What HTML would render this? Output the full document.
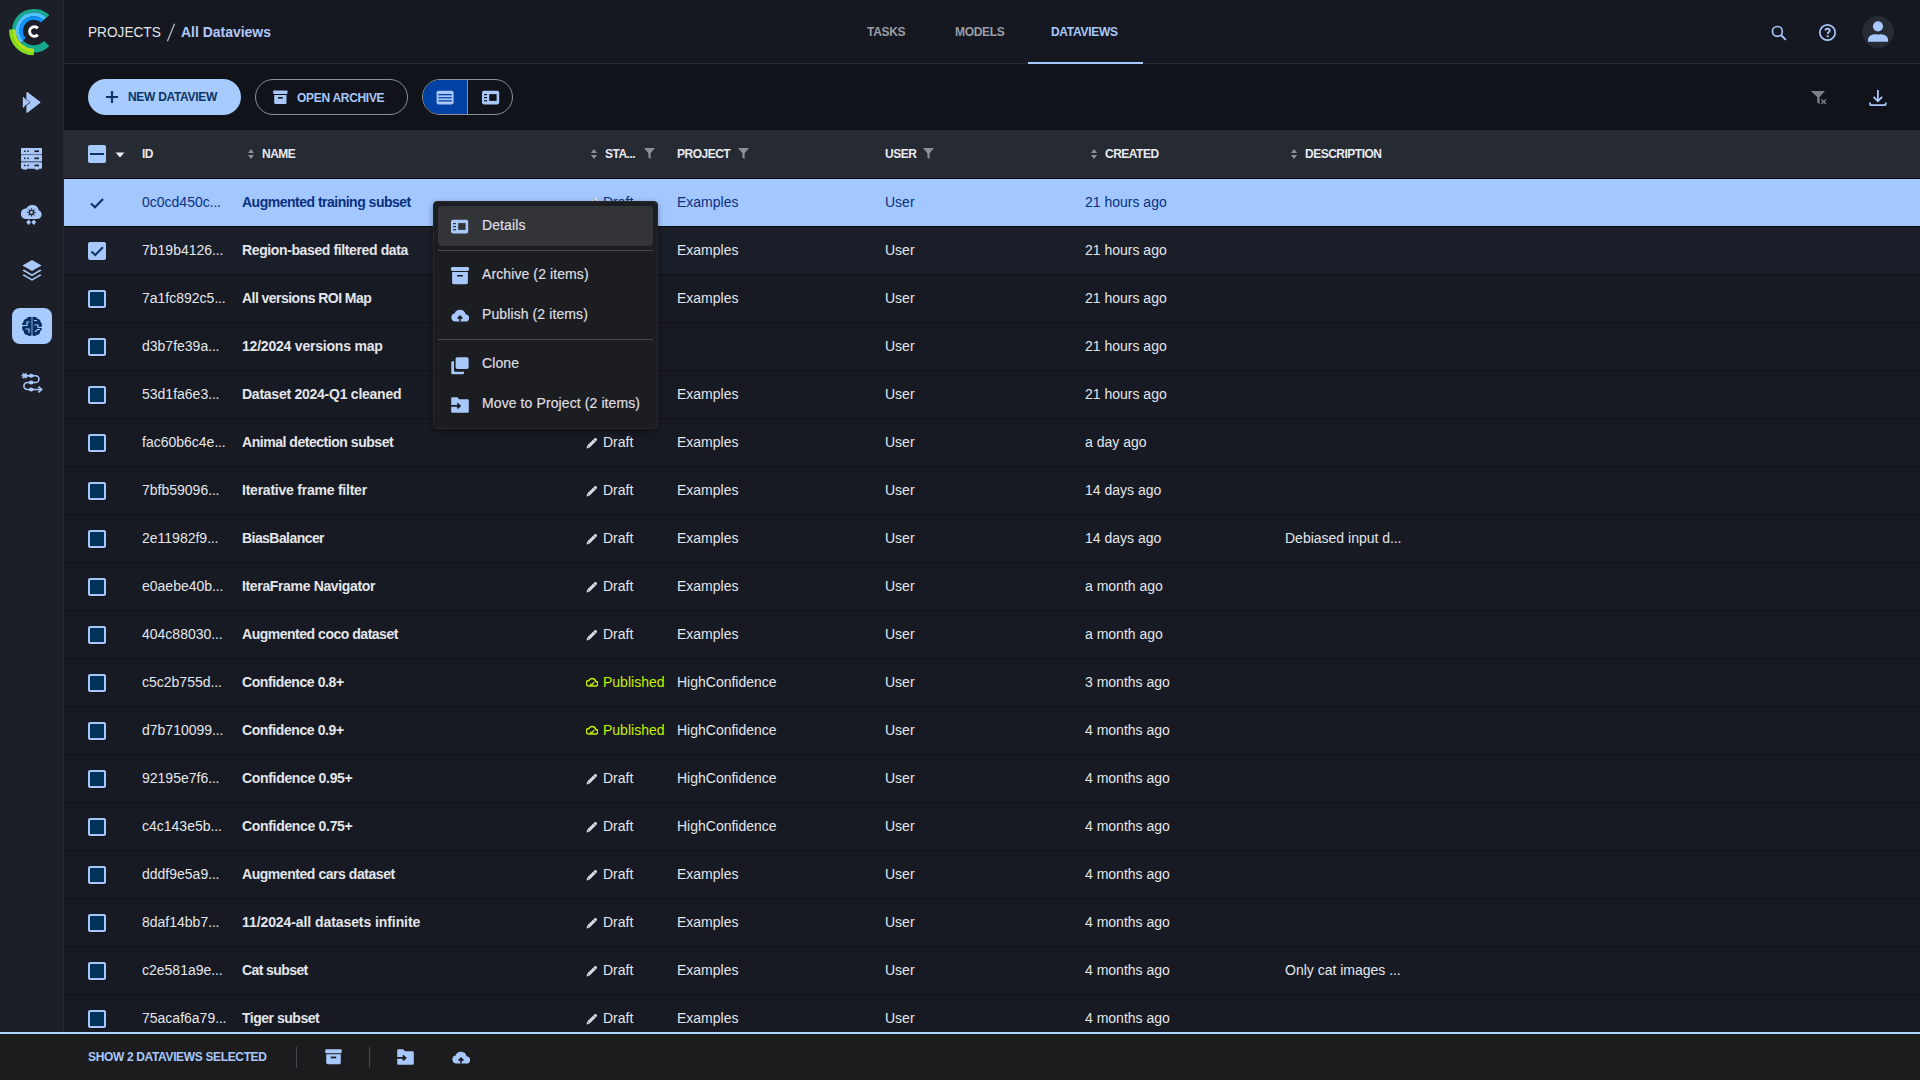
<!DOCTYPE html>
<html><head><meta charset="utf-8">
<style>
*{box-sizing:border-box;margin:0;padding:0}
html,body{width:1920px;height:1080px;overflow:hidden;background:#171a22;font-family:"Liberation Sans",sans-serif;}
.abs{position:absolute}
svg{display:block}
#side{position:absolute;left:0;top:0;width:64px;height:1032px;background:#1c1f27;border-right:1px solid #272b33}
#hdr{position:absolute;left:64px;top:0;width:1856px;height:64px;background:#151820;border-bottom:1px solid #272b33}
#tb{position:absolute;left:64px;top:64px;width:1856px;height:66px;background:#10131a}
#th{position:absolute;left:64px;top:130px;width:1856px;height:49px;background:#262a33;border-bottom:1px solid #06080c}
.row{position:absolute;left:64px;width:1856px;height:48px;border-bottom:1px solid #0f1116;background:#171a22;color:#e3e6ec;font-size:14px;line-height:47px;white-space:nowrap}
.row.chk{background:#1a1e28}
.row span{position:absolute;top:0}
.c-id{left:78px}
.c-name{left:178px;font-weight:700;letter-spacing:-0.45px}
.c-st{left:522px}
.c-st .pen{position:absolute;left:0;top:18px}
.c-st .stt{position:absolute;left:17px;font-weight:400}
.c-st.pub .stt{color:#c4f000}
.c-pr{left:613px}
.c-us{left:821px}
.c-cr{left:1021px}
.c-de{left:1221px}
.hdt{position:absolute;top:0;line-height:48px;font-size:12px;font-weight:700;color:#e8ebf1;letter-spacing:-0.5px;white-space:nowrap}
.hic{position:absolute;top:18px}
.cb{position:absolute;left:24px;top:15px;width:18px;height:18px;border:2px solid #a8c8fb;background:#00325a;border-radius:2px}
.cb.on{background:#a8c8fb}
.sel{background:#a3c8ff;color:#0a3080;border-bottom-color:#05070b}
.sel .c-name{color:#0a3080}
i.el{font-style:normal;letter-spacing:-0.2px}
.btn{position:absolute;top:79px;height:36px;border-radius:18px;font-size:12px;font-weight:700;line-height:36px;white-space:nowrap;letter-spacing:-0.3px}
#foot{position:absolute;left:0;top:1032px;width:1920px;height:48px;background:#1c1c1f;border-top:2px solid #a9d2fd}
.menu{position:absolute;left:433px;top:201px;width:225px;height:228px;background:#1c1d20;border:1px solid #26282c;border-radius:4px;box-shadow:0 2px 6px rgba(0,0,0,.35)}
.mi{position:absolute;left:4px;width:215px;height:40px;font-size:14px;line-height:38px;-webkit-text-stroke:0.2px #dedfe2;letter-spacing:0.1px;color:#dedfe2;white-space:nowrap}
.mi .t{position:absolute;left:44px;top:0}
.mi svg{position:absolute;left:13px}
.msep{position:absolute;left:4px;width:215px;height:1px;background:#45474d}
.tab{position:absolute;top:0;line-height:64px;font-size:12px;font-weight:700;color:#9a9da4;letter-spacing:-0.3px}
</style></head><body>

<div id="side">
 <!-- logo -->
 <svg class="abs" style="left:0;top:0" width="64" height="64" viewBox="0 0 64 64">
  <g transform="translate(33.8 30.7)">
   <path d="M14.14 -14.14 A20.00 20.00 0 0 0 -20.00 0.00" fill="none" stroke="#16a98b" stroke-width="3.6"/>
   <path d="M12.87 12.87 A18.20 18.20 0 0 1 -12.87 12.87" fill="none" stroke="#16a98b" stroke-width="7.4"/>
   <path d="M11.12 -11.92 A16.30 16.30 0 0 0 -11.73 11.32" fill="none" stroke="#52c2ff" stroke-width="3.8"/>
   <path d="M8.50 -9.44 A12.70 12.70 0 0 0 -9.44 8.50" fill="none" stroke="#0b93ff" stroke-width="3.5"/>
   <path d="M0.00 23.00 A23.00 23.00 0 0 1 -22.97 -1.20" fill="none" stroke="#84de1e" stroke-width="3.2"/>
   <path d="M0.00 19.80 A19.80 19.80 0 0 1 -19.77 -1.04" fill="none" stroke="#b2e31b" stroke-width="3.6"/>
  </g>
  <path d="M37.8 28.3 A4.7 4.8 0 1 0 37.8 34.7" fill="none" stroke="#fff" stroke-width="2.9"/>
 </svg>
 <!-- pipelines / experiments -->
 <svg class="abs" style="left:20px;top:90px" width="24" height="25" viewBox="0 0 24 25">
  <path d="M7.2 2.9 L19.6 12.4 L7.2 21.9 Z" fill="#a8c8fb" stroke="#a8c8fb" stroke-width="1.6" stroke-linejoin="round"/>
  <path d="M3.4 7.6 L10.2 12.4 L3.4 17.3 Z" fill="#a8c8fb" stroke="#1c1f27" stroke-width="0.8" stroke-linejoin="round"/>
  <path d="M3.5 7.8 L3.5 17.1" stroke="#a8c8fb" stroke-width="1.4" stroke-linecap="round"/>
  <path d="M3.6 7.7 L9.6 12.2" stroke="#a8c8fb" stroke-width="0.6"/>
 </svg>
 <!-- servers -->
 <svg class="abs" style="left:21px;top:148px" width="21" height="22" viewBox="0 0 21 22">
  <rect x="0" y="0" width="21" height="6.5" rx="0.8" fill="#a8c8fb"/>
  <rect x="0" y="7.1" width="21" height="6.5" rx="0.8" fill="#a8c8fb"/>
  <rect x="0" y="14.2" width="21" height="6.5" rx="0.8" fill="#a8c8fb"/>
  <rect x="2" y="20" width="4" height="1.6" fill="#a8c8fb"/><rect x="14" y="20" width="4" height="1.6" fill="#a8c8fb"/>
  <g fill="#1c1f27"><rect x="3" y="2.5" width="1.5" height="1.5"/><rect x="6.2" y="2.5" width="1.5" height="1.5"/><rect x="13.4" y="2.4" width="4.6" height="1.7"/>
  <rect x="3" y="9.6" width="1.5" height="1.5"/><rect x="6.2" y="9.6" width="1.5" height="1.5"/><rect x="13.4" y="9.5" width="4.6" height="1.7"/>
  <rect x="3" y="16.7" width="1.5" height="1.5"/><rect x="6.2" y="16.7" width="1.5" height="1.5"/><rect x="13.4" y="16.6" width="4.6" height="1.7"/></g>
 </svg>
 <!-- cloud -->
 <svg class="abs" style="left:21px;top:203px" width="22" height="23" viewBox="0 0 22 23">
  <path d="M4.6 16 H16.6 A4.6 4.6 0 0 0 17.8 7.2 A6.6 6.6 0 0 0 5.4 5.6 A5.2 5.2 0 0 0 4.6 16 Z" fill="#a8c8fb"/>
  <circle cx="10.5" cy="9.4" r="2.1" fill="none" stroke="#1c1f27" stroke-width="1.3"/>
  <g stroke="#1c1f27" stroke-width="1.2"><path d="M10.5 5.2 V6.6 M10.5 12.2 V13.6 M6.3 9.4 H7.7 M13.3 9.4 H14.7 M7.6 6.5 L8.5 7.4 M13.4 6.5 L12.5 7.4 M7.6 12.3 L8.5 11.4 M13.4 12.3 L12.5 11.4"/></g>
  <path d="M7.6 16.6 L10 19.3 L7.6 22 L5.2 19.3 Z M12.8 16.6 L15.2 19.3 L12.8 22 L10.4 19.3 Z" fill="#a8c8fb"/>
 </svg>
 <!-- layers -->
 <svg class="abs" style="left:21px;top:259px" width="22" height="23" viewBox="0 0 22 23">
  <path d="M11 1 L20.5 6.5 L11 12 L1.5 6.5 Z" fill="#a8c8fb"/>
  <path d="M3 10.6 L11 15.3 L19 10.6 L20.6 11.6 L11 17.2 L1.4 11.6 Z" fill="#a8c8fb"/>
  <path d="M3 15.2 L11 19.9 L19 15.2 L20.6 16.2 L11 21.8 L1.4 16.2 Z" fill="#a8c8fb"/>
 </svg>
 <!-- brain active -->
 <div class="abs" style="left:12px;top:308px;width:40px;height:36px;border-radius:8px;background:#a8cbfd"></div>
 <svg class="abs" style="left:21px;top:316px" width="22" height="21" viewBox="0 0 22 21">
  <path d="M10.6 1 Q6.5 0.2 5.2 3 Q2.6 3.2 2.4 6 Q0.2 7.8 1.4 10.5 Q0.4 13.5 2.8 15.2 Q3 18.6 6.4 19 Q8.2 20.8 10.6 19.6 Z" fill="#07305e"/>
  <path d="M11.4 1 Q15.5 0.2 16.8 3 Q19.4 3.2 19.6 6 Q21.8 7.8 20.6 10.5 Q21.6 13.5 19.2 15.2 Q19 18.6 15.6 19 Q13.8 20.8 11.4 19.6 Z" fill="#07305e"/>
  <g fill="none" stroke="#a8cbfd" stroke-width="1.1"><path d="M0.5 9.5 H6 V6 H8.5 M4.5 13 H8 V17 M13 4.5 H16 M13.5 9 H17 V11.5 H21 M14 16 L16.5 13.5 H19"/></g>
 </svg>
 <!-- pipelines flow -->
 <svg class="abs" style="left:21px;top:372px" width="22" height="22" viewBox="0 0 22 22">
  <path d="M0.5 3.8 H14.6 A3.35 3.35 0 0 1 14.6 10.5 H6.4 A3.5 3.5 0 0 0 6.4 17.5 H20" fill="none" stroke="#a8c8fb" stroke-width="1.6"/>
  <path d="M1.6 1.4 L4.2 3.8 L1.6 6.2 M4 1.4 L6.6 3.8 L4 6.2" fill="none" stroke="#a8c8fb" stroke-width="1.5"/>
  <ellipse cx="10.2" cy="3.8" rx="2.4" ry="2" fill="#a8c8fb"/><ellipse cx="10.2" cy="10.5" rx="2.4" ry="2" fill="#a8c8fb"/><ellipse cx="10.2" cy="17.5" rx="2.4" ry="2" fill="#a8c8fb"/>
  <path d="M17.4 14.6 L20.6 17.5 L17.4 20.4" fill="none" stroke="#a8c8fb" stroke-width="1.7"/>
 </svg>
</div>

<div id="hdr">
 <div class="abs" style="left:24px;top:0;line-height:63px;font-size:15.5px;color:#e1e4ea;white-space:nowrap;transform:scaleX(0.88);transform-origin:0 0">PROJECTS</div>
 <svg class="abs" style="left:102px;top:23px" width="10" height="19" viewBox="0 0 10 19"><path d="M8.6 0.8 L1.4 18.2" stroke="#b4b8c0" stroke-width="1.3"/></svg>
 <div class="abs" style="left:117px;top:0;line-height:63px;font-size:15.5px;font-weight:700;color:#b2c8fb;white-space:nowrap;transform:scaleX(0.9);transform-origin:0 0">All Dataviews</div>
 <div class="tab" style="left:803px">TASKS</div>
 <div class="tab" style="left:891px">MODELS</div>
 <div class="tab" style="left:987px;color:#a8c8fb">DATAVIEWS</div>
 <div class="abs" style="left:964px;top:62px;width:115px;height:2px;background:#a8c8fb"></div>
 <!-- search -->
 <svg class="abs" style="left:1707px;top:25px" width="16" height="16" viewBox="0 0 16 16">
  <circle cx="6.4" cy="6.4" r="4.9" fill="none" stroke="#a8c8fb" stroke-width="1.7"/>
  <path d="M10 10 L14.8 14.8" stroke="#a8c8fb" stroke-width="1.9"/>
 </svg>
 <!-- help -->
 <svg class="abs" style="left:1754px;top:23px" width="19" height="19" viewBox="0 0 19 19">
  <circle cx="9.5" cy="9.5" r="7.7" fill="none" stroke="#a8c8fb" stroke-width="1.7"/>
  <path d="M7.4 7.6 Q7.4 5.6 9.6 5.6 Q11.7 5.6 11.7 7.4 Q11.7 8.5 10.5 9.2 Q9.7 9.7 9.7 10.9" fill="none" stroke="#a8c8fb" stroke-width="1.9"/>
  <rect x="8.7" y="12.3" width="2" height="1.9" fill="#a8c8fb"/>
 </svg>
 <!-- avatar -->
 <div class="abs" style="left:1798px;top:16px;width:32px;height:32px;border-radius:16px;background:#262a33"></div>
 <svg class="abs" style="left:1803px;top:20px" width="22" height="22" viewBox="0 0 22 22">
  <circle cx="11" cy="6.3" r="5.1" fill="#a8c8fb"/>
  <path d="M1 21.8 V19.8 Q1 15.6 6 14.4 Q8.5 13.8 11 14.6 Q13.5 13.8 16 14.4 Q21 15.6 21 19.8 V21.8 Z" fill="#a8c8fb"/>
 </svg>
</div>

<div id="tb">
 <div class="btn" style="left:24px;top:15px;width:153px;background:#a8cbfd;color:#0b3566">
  <svg class="abs" style="left:18px;top:12px" width="12" height="12" viewBox="0 0 12 12"><path d="M6 0 V12 M0 6 H12" stroke="#0b3566" stroke-width="2.2"/></svg>
  <span class="abs" style="left:40px;top:0">NEW DATAVIEW</span>
 </div>
 <div class="btn" style="left:191px;top:15px;width:153px;border:1px solid #8c8f95;color:#a8c8fb">
  <svg class="abs" style="left:17px;top:10px" width="15" height="15" viewBox="0 0 15 15"><rect x="0.2" y="0.4" width="14.3" height="3.6" rx="0.8" fill="#a8c8fb"/><path d="M1.2 5 H13.5 V12.8 Q13.5 14 12.3 14 H2.4 Q1.2 14 1.2 12.8 Z" fill="#a8c8fb"/><rect x="5" y="7" width="4.7" height="1.6" fill="#10131a"/></svg>
  <span class="abs" style="left:41px;top:0">OPEN ARCHIVE</span>
 </div>
 <div class="abs" style="left:358px;top:15px;width:91px;height:36px;border-radius:18px;border:1px solid #8c8f95;overflow:hidden">
  <div class="abs" style="left:0;top:0;width:44px;height:36px;background:#0041a3"></div>
  <div class="abs" style="left:44px;top:0;width:1px;height:36px;background:#8c8f95"></div>
  <svg class="abs" style="left:13px;top:10px" width="18" height="15" viewBox="0 0 18 15"><rect x="0.6" y="0.8" width="17" height="13.6" rx="1.8" fill="#a8c8fb"/><rect x="2.4" y="4" width="13.4" height="1.3" fill="#0041a3"/><rect x="2.4" y="7.1" width="13.4" height="1.3" fill="#0041a3"/><rect x="2.4" y="10.2" width="13.4" height="1.3" fill="#0041a3"/></svg>
  <svg class="abs" style="left:59px;top:10px" width="18" height="15" viewBox="0 0 18 15"><rect x="0" y="0.8" width="17.2" height="13.6" rx="1.8" fill="#a8c8fb"/><rect x="7.2" y="4.1" width="7.4" height="6.8" fill="#10131a"/><rect x="2" y="4" width="3" height="1.2" fill="#10131a"/><rect x="2" y="7" width="3" height="1.2" fill="#10131a"/><rect x="2" y="10.1" width="3" height="1.2" fill="#10131a"/></svg>
 </div>
 <!-- filter clear -->
 <svg class="abs" style="left:1746px;top:26px" width="18" height="16" viewBox="0 0 18 16"><path d="M0.8 0.9 H15 L9.6 6.9 V14.2 L7.2 12.4 V6.9 Z" fill="#7c7f85"/><path d="M11.4 9.4 L16 14 M16 9.4 L11.4 14" stroke="#7c7f85" stroke-width="1.4"/></svg>
 <!-- download -->
 <svg class="abs" style="left:1804px;top:26px" width="20" height="17" viewBox="0 0 20 17"><path d="M9.9 0 V11.6 M5.6 6.9 L9.9 11.2 L14.2 6.9" fill="none" stroke="#a8c8fb" stroke-width="1.8"/><path d="M2 12.4 V13.4 Q2 15.2 3.8 15.2 H16 Q17.8 15.2 17.8 13.4 V12.4" fill="none" stroke="#a8c8fb" stroke-width="1.8"/></svg>
</div>

<div id="th">
 <div class="abs" style="left:24px;top:15px;width:18px;height:18px;border-radius:2px;background:#a8cbfd"><div class="abs" style="left:2px;top:8px;width:14px;height:2px;background:#0b3566"></div></div>
 <svg class="abs" style="left:51px;top:22px" width="10" height="6" viewBox="0 0 10 6"><path d="M0.5 0.5 H9.5 L5 5.5 Z" fill="#e8ebf1"/></svg>
 <div class="hdt" style="left:78px">ID</div>
 <div class="hic" style="left:184px"><svg width="6" height="12" viewBox="0 0 6 12"><path d="M0 5 L3 1 L6 5 Z M0 7 L3 11 L6 7 Z" fill="#8d9096"/></svg></div><div class="hdt" style="left:198px">NAME</div>
 <div class="hic" style="left:527px"><svg width="6" height="12" viewBox="0 0 6 12"><path d="M0 5 L3 1 L6 5 Z M0 7 L3 11 L6 7 Z" fill="#8d9096"/></svg></div><div class="hdt" style="left:541px">STA...</div><div class="hic" style="left:580px"><svg width="11" height="11" viewBox="0 0 11 11"><path d="M0 0 H11 L6.6 5.2 V11 L4.4 9.6 V5.2 Z" fill="#8d9096"/></svg></div>
 <div class="hdt" style="left:613px">PROJECT</div><div class="hic" style="left:674px"><svg width="11" height="11" viewBox="0 0 11 11"><path d="M0 0 H11 L6.6 5.2 V11 L4.4 9.6 V5.2 Z" fill="#8d9096"/></svg></div>
 <div class="hdt" style="left:821px">USER</div><div class="hic" style="left:859px"><svg width="11" height="11" viewBox="0 0 11 11"><path d="M0 0 H11 L6.6 5.2 V11 L4.4 9.6 V5.2 Z" fill="#8d9096"/></svg></div>
 <div class="hic" style="left:1027px"><svg width="6" height="12" viewBox="0 0 6 12"><path d="M0 5 L3 1 L6 5 Z M0 7 L3 11 L6 7 Z" fill="#8d9096"/></svg></div><div class="hdt" style="left:1041px">CREATED</div>
 <div class="hic" style="left:1227px"><svg width="6" height="12" viewBox="0 0 6 12"><path d="M0 5 L3 1 L6 5 Z M0 7 L3 11 L6 7 Z" fill="#8d9096"/></svg></div><div class="hdt" style="left:1241px">DESCRIPTION</div>
</div>

<div class="row sel" style="top:179px"><svg class="abs" style="left:25px;top:17px" width="16" height="14" viewBox="0 0 16 14"><path d="M2 7.5 L6 11.2 L14 3" fill="none" stroke="#0b3566" stroke-width="2.2"/></svg><span class="c-id">0c0cd450c<i class="el">...</i></span><span class="c-name" style="letter-spacing:-0.5px">Augmented training subset</span><span class="c-st"><svg class="pen" width="12" height="12" viewBox="0 0 12 12"><path d="M0.5 11.5 L1.2 8.6 L8.6 1.2 Q9.3 0.5 10 1.2 L10.8 2 Q11.5 2.7 10.8 3.4 L3.4 10.8 Z" fill="#e3e6ec"/><path d="M7.7 2.3 L9.7 4.3 M1.3 8.5 L3.5 10.7" stroke="#171a22" stroke-width="0.6"/><path d="M2.6 8.6 L8.6 2.6 M3.4 9.4 L9.4 3.4" stroke="#9aa0ac" stroke-width="0.35"/></svg><b class="stt">Draft</b></span><span class="c-pr">Examples</span><span class="c-us">User</span><span class="c-cr">21 hours ago</span><span class="c-de"></span></div>
<div class="row chk" style="top:227px"><div class="cb on"><svg width="18" height="18" viewBox="0 0 18 18" style="position:absolute;left:-2px;top:-2px"><path d="M3.4 9.4 L7.3 13 L14.9 5.2" fill="none" stroke="#0b3566" stroke-width="2"/></svg></div><span class="c-id">7b19b4126<i class="el">...</i></span><span class="c-name" style="letter-spacing:-0.38px">Region-based filtered data</span><span class="c-st"><svg class="pen" width="12" height="12" viewBox="0 0 12 12"><path d="M0.5 11.5 L1.2 8.6 L8.6 1.2 Q9.3 0.5 10 1.2 L10.8 2 Q11.5 2.7 10.8 3.4 L3.4 10.8 Z" fill="#e3e6ec"/><path d="M7.7 2.3 L9.7 4.3 M1.3 8.5 L3.5 10.7" stroke="#171a22" stroke-width="0.6"/><path d="M2.6 8.6 L8.6 2.6 M3.4 9.4 L9.4 3.4" stroke="#9aa0ac" stroke-width="0.35"/></svg><b class="stt">Draft</b></span><span class="c-pr">Examples</span><span class="c-us">User</span><span class="c-cr">21 hours ago</span><span class="c-de"></span></div>
<div class="row" style="top:275px"><div class="cb"></div><span class="c-id">7a1fc892c5<i class="el">...</i></span><span class="c-name" style="letter-spacing:-0.54px">All versions ROI Map</span><span class="c-st"><svg class="pen" width="12" height="12" viewBox="0 0 12 12"><path d="M0.5 11.5 L1.2 8.6 L8.6 1.2 Q9.3 0.5 10 1.2 L10.8 2 Q11.5 2.7 10.8 3.4 L3.4 10.8 Z" fill="#e3e6ec"/><path d="M7.7 2.3 L9.7 4.3 M1.3 8.5 L3.5 10.7" stroke="#171a22" stroke-width="0.6"/><path d="M2.6 8.6 L8.6 2.6 M3.4 9.4 L9.4 3.4" stroke="#9aa0ac" stroke-width="0.35"/></svg><b class="stt">Draft</b></span><span class="c-pr">Examples</span><span class="c-us">User</span><span class="c-cr">21 hours ago</span><span class="c-de"></span></div>
<div class="row" style="top:323px"><div class="cb"></div><span class="c-id">d3b7fe39a<i class="el">...</i></span><span class="c-name" style="letter-spacing:-0.21px">12/2024 versions map</span><span class="c-st"><svg class="pen" width="12" height="12" viewBox="0 0 12 12"><path d="M0.5 11.5 L1.2 8.6 L8.6 1.2 Q9.3 0.5 10 1.2 L10.8 2 Q11.5 2.7 10.8 3.4 L3.4 10.8 Z" fill="#e3e6ec"/><path d="M7.7 2.3 L9.7 4.3 M1.3 8.5 L3.5 10.7" stroke="#171a22" stroke-width="0.6"/><path d="M2.6 8.6 L8.6 2.6 M3.4 9.4 L9.4 3.4" stroke="#9aa0ac" stroke-width="0.35"/></svg><b class="stt">Draft</b></span><span class="c-pr"></span><span class="c-us">User</span><span class="c-cr">21 hours ago</span><span class="c-de"></span></div>
<div class="row" style="top:371px"><div class="cb"></div><span class="c-id">53d1fa6e3<i class="el">...</i></span><span class="c-name" style="letter-spacing:-0.25px">Dataset 2024-Q1 cleaned</span><span class="c-st"><svg class="pen" width="12" height="12" viewBox="0 0 12 12"><path d="M0.5 11.5 L1.2 8.6 L8.6 1.2 Q9.3 0.5 10 1.2 L10.8 2 Q11.5 2.7 10.8 3.4 L3.4 10.8 Z" fill="#e3e6ec"/><path d="M7.7 2.3 L9.7 4.3 M1.3 8.5 L3.5 10.7" stroke="#171a22" stroke-width="0.6"/><path d="M2.6 8.6 L8.6 2.6 M3.4 9.4 L9.4 3.4" stroke="#9aa0ac" stroke-width="0.35"/></svg><b class="stt">Draft</b></span><span class="c-pr">Examples</span><span class="c-us">User</span><span class="c-cr">21 hours ago</span><span class="c-de"></span></div>
<div class="row" style="top:419px"><div class="cb"></div><span class="c-id">fac60b6c4e<i class="el">...</i></span><span class="c-name" style="letter-spacing:-0.46px">Animal detection subset</span><span class="c-st"><svg class="pen" width="12" height="12" viewBox="0 0 12 12"><path d="M0.5 11.5 L1.2 8.6 L8.6 1.2 Q9.3 0.5 10 1.2 L10.8 2 Q11.5 2.7 10.8 3.4 L3.4 10.8 Z" fill="#e3e6ec"/><path d="M7.7 2.3 L9.7 4.3 M1.3 8.5 L3.5 10.7" stroke="#171a22" stroke-width="0.6"/><path d="M2.6 8.6 L8.6 2.6 M3.4 9.4 L9.4 3.4" stroke="#9aa0ac" stroke-width="0.35"/></svg><b class="stt">Draft</b></span><span class="c-pr">Examples</span><span class="c-us">User</span><span class="c-cr">a day ago</span><span class="c-de"></span></div>
<div class="row" style="top:467px"><div class="cb"></div><span class="c-id">7bfb59096<i class="el">...</i></span><span class="c-name" style="letter-spacing:-0.23px">Iterative frame filter</span><span class="c-st"><svg class="pen" width="12" height="12" viewBox="0 0 12 12"><path d="M0.5 11.5 L1.2 8.6 L8.6 1.2 Q9.3 0.5 10 1.2 L10.8 2 Q11.5 2.7 10.8 3.4 L3.4 10.8 Z" fill="#e3e6ec"/><path d="M7.7 2.3 L9.7 4.3 M1.3 8.5 L3.5 10.7" stroke="#171a22" stroke-width="0.6"/><path d="M2.6 8.6 L8.6 2.6 M3.4 9.4 L9.4 3.4" stroke="#9aa0ac" stroke-width="0.35"/></svg><b class="stt">Draft</b></span><span class="c-pr">Examples</span><span class="c-us">User</span><span class="c-cr">14 days ago</span><span class="c-de"></span></div>
<div class="row" style="top:515px"><div class="cb"></div><span class="c-id">2e11982f9<i class="el">...</i></span><span class="c-name" style="letter-spacing:-0.56px">BiasBalancer</span><span class="c-st"><svg class="pen" width="12" height="12" viewBox="0 0 12 12"><path d="M0.5 11.5 L1.2 8.6 L8.6 1.2 Q9.3 0.5 10 1.2 L10.8 2 Q11.5 2.7 10.8 3.4 L3.4 10.8 Z" fill="#e3e6ec"/><path d="M7.7 2.3 L9.7 4.3 M1.3 8.5 L3.5 10.7" stroke="#171a22" stroke-width="0.6"/><path d="M2.6 8.6 L8.6 2.6 M3.4 9.4 L9.4 3.4" stroke="#9aa0ac" stroke-width="0.35"/></svg><b class="stt">Draft</b></span><span class="c-pr">Examples</span><span class="c-us">User</span><span class="c-cr">14 days ago</span><span class="c-de">Debiased input d<i class="el">...</i></span></div>
<div class="row" style="top:563px"><div class="cb"></div><span class="c-id">e0aebe40b<i class="el">...</i></span><span class="c-name" style="letter-spacing:-0.35px">IteraFrame Navigator</span><span class="c-st"><svg class="pen" width="12" height="12" viewBox="0 0 12 12"><path d="M0.5 11.5 L1.2 8.6 L8.6 1.2 Q9.3 0.5 10 1.2 L10.8 2 Q11.5 2.7 10.8 3.4 L3.4 10.8 Z" fill="#e3e6ec"/><path d="M7.7 2.3 L9.7 4.3 M1.3 8.5 L3.5 10.7" stroke="#171a22" stroke-width="0.6"/><path d="M2.6 8.6 L8.6 2.6 M3.4 9.4 L9.4 3.4" stroke="#9aa0ac" stroke-width="0.35"/></svg><b class="stt">Draft</b></span><span class="c-pr">Examples</span><span class="c-us">User</span><span class="c-cr">a month ago</span><span class="c-de"></span></div>
<div class="row" style="top:611px"><div class="cb"></div><span class="c-id">404c88030<i class="el">...</i></span><span class="c-name" style="letter-spacing:-0.48px">Augmented coco dataset</span><span class="c-st"><svg class="pen" width="12" height="12" viewBox="0 0 12 12"><path d="M0.5 11.5 L1.2 8.6 L8.6 1.2 Q9.3 0.5 10 1.2 L10.8 2 Q11.5 2.7 10.8 3.4 L3.4 10.8 Z" fill="#e3e6ec"/><path d="M7.7 2.3 L9.7 4.3 M1.3 8.5 L3.5 10.7" stroke="#171a22" stroke-width="0.6"/><path d="M2.6 8.6 L8.6 2.6 M3.4 9.4 L9.4 3.4" stroke="#9aa0ac" stroke-width="0.35"/></svg><b class="stt">Draft</b></span><span class="c-pr">Examples</span><span class="c-us">User</span><span class="c-cr">a month ago</span><span class="c-de"></span></div>
<div class="row" style="top:659px"><div class="cb"></div><span class="c-id">c5c2b755d<i class="el">...</i></span><span class="c-name" style="letter-spacing:-0.4px">Confidence 0.8+</span><span class="c-st pub"><svg class="pen" width="12" height="10" viewBox="0 0 12 10"><path d="M3 9 H9.5 A2.3 2.3 0 0 0 9.6 4.4 A3.6 3.6 0 0 0 2.8 3.6 A2.7 2.7 0 0 0 3 9 Z" fill="none" stroke="#c4f000" stroke-width="1.5"/><path d="M4.2 6.6 L5.6 8 L8.2 5.2" fill="none" stroke="#c4f000" stroke-width="1.3"/></svg><b class="stt">Published</b></span><span class="c-pr">HighConfidence</span><span class="c-us">User</span><span class="c-cr">3 months ago</span><span class="c-de"></span></div>
<div class="row" style="top:707px"><div class="cb"></div><span class="c-id">d7b710099<i class="el">...</i></span><span class="c-name" style="letter-spacing:-0.4px">Confidence 0.9+</span><span class="c-st pub"><svg class="pen" width="12" height="10" viewBox="0 0 12 10"><path d="M3 9 H9.5 A2.3 2.3 0 0 0 9.6 4.4 A3.6 3.6 0 0 0 2.8 3.6 A2.7 2.7 0 0 0 3 9 Z" fill="none" stroke="#c4f000" stroke-width="1.5"/><path d="M4.2 6.6 L5.6 8 L8.2 5.2" fill="none" stroke="#c4f000" stroke-width="1.3"/></svg><b class="stt">Published</b></span><span class="c-pr">HighConfidence</span><span class="c-us">User</span><span class="c-cr">4 months ago</span><span class="c-de"></span></div>
<div class="row" style="top:755px"><div class="cb"></div><span class="c-id">92195e7f6<i class="el">...</i></span><span class="c-name" style="letter-spacing:-0.32px">Confidence 0.95+</span><span class="c-st"><svg class="pen" width="12" height="12" viewBox="0 0 12 12"><path d="M0.5 11.5 L1.2 8.6 L8.6 1.2 Q9.3 0.5 10 1.2 L10.8 2 Q11.5 2.7 10.8 3.4 L3.4 10.8 Z" fill="#e3e6ec"/><path d="M7.7 2.3 L9.7 4.3 M1.3 8.5 L3.5 10.7" stroke="#171a22" stroke-width="0.6"/><path d="M2.6 8.6 L8.6 2.6 M3.4 9.4 L9.4 3.4" stroke="#9aa0ac" stroke-width="0.35"/></svg><b class="stt">Draft</b></span><span class="c-pr">HighConfidence</span><span class="c-us">User</span><span class="c-cr">4 months ago</span><span class="c-de"></span></div>
<div class="row" style="top:803px"><div class="cb"></div><span class="c-id">c4c143e5b<i class="el">...</i></span><span class="c-name" style="letter-spacing:-0.32px">Confidence 0.75+</span><span class="c-st"><svg class="pen" width="12" height="12" viewBox="0 0 12 12"><path d="M0.5 11.5 L1.2 8.6 L8.6 1.2 Q9.3 0.5 10 1.2 L10.8 2 Q11.5 2.7 10.8 3.4 L3.4 10.8 Z" fill="#e3e6ec"/><path d="M7.7 2.3 L9.7 4.3 M1.3 8.5 L3.5 10.7" stroke="#171a22" stroke-width="0.6"/><path d="M2.6 8.6 L8.6 2.6 M3.4 9.4 L9.4 3.4" stroke="#9aa0ac" stroke-width="0.35"/></svg><b class="stt">Draft</b></span><span class="c-pr">HighConfidence</span><span class="c-us">User</span><span class="c-cr">4 months ago</span><span class="c-de"></span></div>
<div class="row" style="top:851px"><div class="cb"></div><span class="c-id">dddf9e5a9<i class="el">...</i></span><span class="c-name" style="letter-spacing:-0.45px">Augmented cars dataset</span><span class="c-st"><svg class="pen" width="12" height="12" viewBox="0 0 12 12"><path d="M0.5 11.5 L1.2 8.6 L8.6 1.2 Q9.3 0.5 10 1.2 L10.8 2 Q11.5 2.7 10.8 3.4 L3.4 10.8 Z" fill="#e3e6ec"/><path d="M7.7 2.3 L9.7 4.3 M1.3 8.5 L3.5 10.7" stroke="#171a22" stroke-width="0.6"/><path d="M2.6 8.6 L8.6 2.6 M3.4 9.4 L9.4 3.4" stroke="#9aa0ac" stroke-width="0.35"/></svg><b class="stt">Draft</b></span><span class="c-pr">Examples</span><span class="c-us">User</span><span class="c-cr">4 months ago</span><span class="c-de"></span></div>
<div class="row" style="top:899px"><div class="cb"></div><span class="c-id">8daf14bb7<i class="el">...</i></span><span class="c-name" style="letter-spacing:-0.08px">11/2024-all datasets infinite</span><span class="c-st"><svg class="pen" width="12" height="12" viewBox="0 0 12 12"><path d="M0.5 11.5 L1.2 8.6 L8.6 1.2 Q9.3 0.5 10 1.2 L10.8 2 Q11.5 2.7 10.8 3.4 L3.4 10.8 Z" fill="#e3e6ec"/><path d="M7.7 2.3 L9.7 4.3 M1.3 8.5 L3.5 10.7" stroke="#171a22" stroke-width="0.6"/><path d="M2.6 8.6 L8.6 2.6 M3.4 9.4 L9.4 3.4" stroke="#9aa0ac" stroke-width="0.35"/></svg><b class="stt">Draft</b></span><span class="c-pr">Examples</span><span class="c-us">User</span><span class="c-cr">4 months ago</span><span class="c-de"></span></div>
<div class="row" style="top:947px"><div class="cb"></div><span class="c-id">c2e581a9e<i class="el">...</i></span><span class="c-name" style="letter-spacing:-0.59px">Cat subset</span><span class="c-st"><svg class="pen" width="12" height="12" viewBox="0 0 12 12"><path d="M0.5 11.5 L1.2 8.6 L8.6 1.2 Q9.3 0.5 10 1.2 L10.8 2 Q11.5 2.7 10.8 3.4 L3.4 10.8 Z" fill="#e3e6ec"/><path d="M7.7 2.3 L9.7 4.3 M1.3 8.5 L3.5 10.7" stroke="#171a22" stroke-width="0.6"/><path d="M2.6 8.6 L8.6 2.6 M3.4 9.4 L9.4 3.4" stroke="#9aa0ac" stroke-width="0.35"/></svg><b class="stt">Draft</b></span><span class="c-pr">Examples</span><span class="c-us">User</span><span class="c-cr">4 months ago</span><span class="c-de">Only cat images <i class="el">...</i></span></div>
<div class="row" style="top:995px"><div class="cb"></div><span class="c-id">75acaf6a79<i class="el">...</i></span><span class="c-name" style="letter-spacing:-0.48px">Tiger subset</span><span class="c-st"><svg class="pen" width="12" height="12" viewBox="0 0 12 12"><path d="M0.5 11.5 L1.2 8.6 L8.6 1.2 Q9.3 0.5 10 1.2 L10.8 2 Q11.5 2.7 10.8 3.4 L3.4 10.8 Z" fill="#e3e6ec"/><path d="M7.7 2.3 L9.7 4.3 M1.3 8.5 L3.5 10.7" stroke="#171a22" stroke-width="0.6"/><path d="M2.6 8.6 L8.6 2.6 M3.4 9.4 L9.4 3.4" stroke="#9aa0ac" stroke-width="0.35"/></svg><b class="stt">Draft</b></span><span class="c-pr">Examples</span><span class="c-us">User</span><span class="c-cr">4 months ago</span><span class="c-de"></span></div>


<div class="menu">
 <div class="mi" style="top:4px;background:#333437;border-radius:4px">
  <svg style="top:13px" width="18" height="15" viewBox="0 0 18 15"><rect x="0" y="0.8" width="17.2" height="13.6" rx="1.8" fill="#a8c8fb"/><rect x="7.2" y="4.1" width="7.4" height="6.8" fill="#333437"/><rect x="2" y="4" width="3" height="1.2" fill="#333437"/><rect x="2" y="7" width="3" height="1.2" fill="#333437"/><rect x="2" y="10.1" width="3" height="1.2" fill="#333437"/></svg>
  <span class="t">Details</span></div>
 <div class="msep" style="top:48px"></div>
 <div class="mi" style="top:53px">
  <svg style="top:12px" width="18" height="18" viewBox="0 0 18 18"><rect x="0" y="0" width="18" height="4" rx="1.4" fill="#a8c8fb"/><path d="M1.1 4.9 H16.9 V15.6 Q16.9 17.2 15.3 17.2 H2.7 Q1.1 17.2 1.1 15.6 Z" fill="#a8c8fb"/><rect x="6" y="8" width="6" height="1.6" rx="0.6" fill="#1c1d20"/></svg>
  <span class="t">Archive (2 items)</span></div>
 <div class="mi" style="top:93px">
  <svg style="top:14px" width="18" height="13" viewBox="0 0 18 13"><path d="M4.3 12.5 H14.4 A3.6 3.6 0 0 0 14.6 5.3 A5.8 5.8 0 0 0 3.6 4.4 A4.1 4.1 0 0 0 4.3 12.5 Z" fill="#a8c8fb"/><path d="M9 12.5 V7.6 M6.6 9.6 L9 7.2 L11.4 9.6" fill="none" stroke="#1c1d20" stroke-width="1.6"/></svg>
  <span class="t">Publish (2 items)</span></div>
 <div class="msep" style="top:137px"></div>
 <div class="mi" style="top:142px">
  <svg style="top:13px" width="18" height="18" viewBox="0 0 18 18"><rect x="4.6" y="0.3" width="13" height="11.6" rx="1.6" fill="#a8c8fb"/><path d="M0.3 5.4 Q0.3 4.2 1.5 4.2 H3 V13.4 Q3 14.8 4.4 14.8 H13 V16 Q13 17.2 11.8 17.2 H1.5 Q0.3 17.2 0.3 16 Z" fill="#a8c8fb"/></svg>
  <span class="t">Clone</span></div>
 <div class="mi" style="top:182px">
  <svg style="top:13px" width="18" height="16" viewBox="0 0 18 16"><path d="M0.2 1.4 Q0.2 0.2 1.4 0.2 H6.4 L8.2 2.2 H16.6 Q17.8 2.2 17.8 3.4 V14.6 Q17.8 15.8 16.6 15.8 H1.4 Q0.2 15.8 0.2 14.6 Z" fill="#a8c8fb"/><path d="M0 8.9 H8.6 M6.2 6.4 L9 8.9 L6.2 11.4" fill="none" stroke="#1c1d20" stroke-width="1.7"/></svg>
  <span class="t">Move to Project (2 items)</span></div>
</div>

<div id="foot">
 <div class="abs" style="left:88px;top:0;line-height:46px;font-size:12px;font-weight:700;color:#a8c8fb;letter-spacing:-0.35px;white-space:nowrap">SHOW 2 DATAVIEWS SELECTED</div>
 <div class="abs" style="left:296px;top:13px;width:1px;height:21px;background:#45474d"></div>
 <svg class="abs" style="left:325px;top:15px" width="17" height="16" viewBox="0 0 17 16"><rect x="0.3" y="0.3" width="16.4" height="4" rx="1" fill="#a8c8fb"/><path d="M1.2 5.3 H15.8 V13.8 Q15.8 15.2 14.4 15.2 H2.6 Q1.2 15.2 1.2 13.8 Z" fill="#a8c8fb"/><rect x="5.8" y="7.6" width="5.4" height="1.7" fill="#1b1c20"/></svg>
 <div class="abs" style="left:369px;top:13px;width:1px;height:21px;background:#45474d"></div>
 <svg class="abs" style="left:397px;top:15px" width="17" height="16" viewBox="0 0 17 16"><path d="M0.2 1.4 Q0.2 0.2 1.4 0.2 H6.2 L8 2.2 H15.6 Q16.8 2.2 16.8 3.4 V14.6 Q16.8 15.8 15.6 15.8 H1.4 Q0.2 15.8 0.2 14.6 Z" fill="#a8c8fb"/><path d="M0 8.9 H8.2 M5.8 6.4 L8.6 8.9 L5.8 11.4" fill="none" stroke="#1b1c20" stroke-width="1.7"/></svg>
 <svg class="abs" style="left:452px;top:17px" width="18" height="13" viewBox="0 0 18 13"><path d="M4.3 12.5 H14.4 A3.6 3.6 0 0 0 14.6 5.3 A5.8 5.8 0 0 0 3.6 4.4 A4.1 4.1 0 0 0 4.3 12.5 Z" fill="#a8c8fb"/><path d="M9 12.5 V7.6 M6.6 9.6 L9 7.2 L11.4 9.6" fill="none" stroke="#1b1c20" stroke-width="1.6"/></svg>
</div>
</body></html>
